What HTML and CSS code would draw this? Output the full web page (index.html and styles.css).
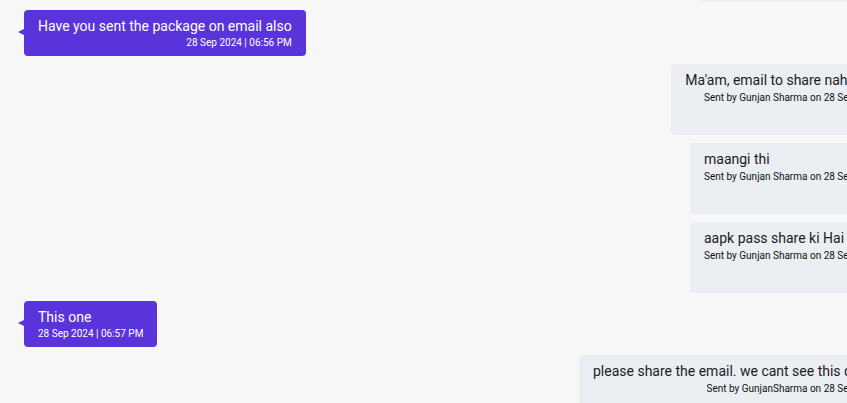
FILE: index.html
```html
<!DOCTYPE html>
<html lang="en">
<head>
<meta charset="utf-8">
<title>Chat</title>
<link rel="stylesheet" href="styles.css">
</head>
<body>
<div class="chat">
  <div class="msg msg-out">
    <div class="msg-text">Ok ma'am</div>
    <div class="msg-meta">Sent by GunjanSharma on 28 Sep 2024 | 6:55 PM</div>
  </div>
  <div class="msg msg-in">
    <div class="msg-text">Have you sent the package on email also</div>
    <div class="msg-meta">28 Sep 2024 | 06:56 PM</div>
  </div>
  <div class="msg msg-out">
    <div class="msg-text">Ma'am, email to share nahi kiya tha aap</div>
    <div class="msg-meta">Sent by Gunjan Sharma on 28 Sep 2024 | 06:56 PM</div>
  </div>
  <div class="msg msg-out">
    <div class="msg-text">maangi thi</div>
    <div class="msg-meta">Sent by Gunjan Sharma on 28 Sep 2024 | 06:56 PM</div>
  </div>
  <div class="msg msg-out">
    <div class="msg-text">aapk pass share ki Hai Kya</div>
    <div class="msg-meta">Sent by Gunjan Sharma on 28 Sep 2024 | 06:57 PM</div>
  </div>
  <div class="msg msg-in">
    <div class="msg-text">This one</div>
    <div class="msg-meta">28 Sep 2024 | 06:57 PM</div>
  </div>
  <div class="msg msg-out">
    <div class="msg-text">please share the email. we cant see this document yet</div>
    <div class="msg-meta">Sent by GunjanSharma on 28 Sep 2024 | 06:58 PM</div>
  </div>
</div>
</body>
</html>
```
FILE: styles.css
```css
html, body {
  margin: 0;
  padding: 0;
  overflow: hidden;
  background: #f7f7f7;
}
body {
  font-family: Roboto, "Liberation Sans", sans-serif;
}
.chat {
  width: 943px;
  margin-top: -69px;
  padding-left: 24px;
  box-sizing: border-box;
  display: flex;
  flex-direction: column;
  align-items: flex-start;
  gap: 8px;
}
.msg {
  position: relative;
  box-sizing: border-box;
  border-radius: 4px;
  padding: 6px 14px 7px;
  max-width: 560px;
}
.msg-text {
  font-size: 14px;
  line-height: 20px;
  white-space: nowrap;
}
.msg-meta {
  font-size: 10px;
  line-height: 13px;
  text-align: right;
  white-space: nowrap;
}
.msg-in {
  background: #5a34da;
  color: #ffffff;
  height: 46px;
}
.msg-in::before {
  content: "";
  position: absolute;
  left: -6px;
  top: 19px;
  border-top: 3px solid transparent;
  border-bottom: 3px solid transparent;
  border-right: 6px solid #5a34da;
}
.msg-out {
  align-self: flex-end;
  background: #ebeef2;
  color: #1c1c24;
  height: 71px;
}
.msg-out .msg-meta {
  margin-top: 1px;
  color: #111111;
}
```
